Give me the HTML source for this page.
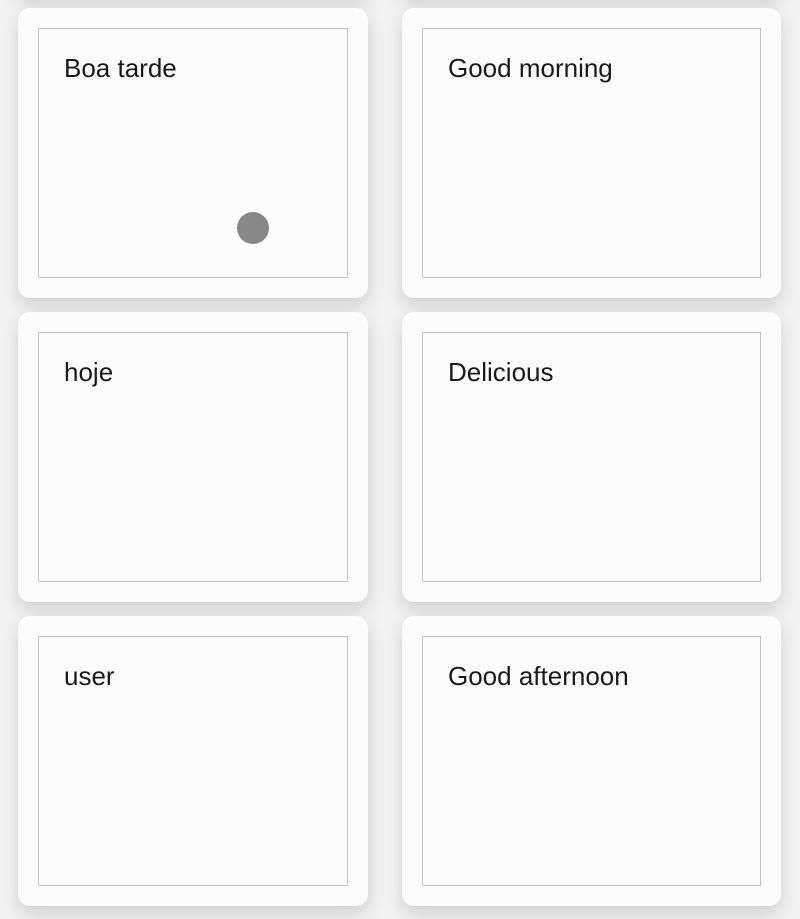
<!DOCTYPE html>
<html><head><style>
html,body{margin:0;padding:0;width:800px;height:919px;overflow:hidden;background:#f2f2f2;font-family:"Liberation Sans",Arial,sans-serif}
.card{position:absolute;background:#fcfcfc;border-radius:12px;box-shadow:0 8px 18px rgba(0,0,0,0.14)}
.inner{position:absolute;left:20px;top:20px;right:20px;bottom:20px;border:1.5px solid #c2c2c2;box-sizing:border-box}
.t{position:absolute;left:25px;top:24px;font-size:26px;color:#1a1a1a;white-space:nowrap}
.dot{position:absolute;width:32px;height:32px;border-radius:50%;background:#888}
</style></head><body>
<div class="card" style="left:18px;top:-400px;width:350px;height:396px"></div>
<div class="card" style="left:402px;top:-400px;width:379px;height:396px"></div>

<div class="card" style="left:18px;top:8px;width:350px;height:290px"><div class="inner"><div class="t">Boa tarde</div><div class="dot" style="left:198px;top:183px"></div></div></div>
<div class="card" style="left:402px;top:8px;width:379px;height:290px"><div class="inner"><div class="t">Good morning</div></div></div>

<div class="card" style="left:18px;top:312px;width:350px;height:290px"><div class="inner"><div class="t">hoje</div></div></div>
<div class="card" style="left:402px;top:312px;width:379px;height:290px"><div class="inner"><div class="t">Delicious</div></div></div>

<div class="card" style="left:18px;top:616px;width:350px;height:290px"><div class="inner"><div class="t">user</div></div></div>
<div class="card" style="left:402px;top:616px;width:379px;height:290px"><div class="inner"><div class="t">Good afternoon</div></div></div>
</body></html>
